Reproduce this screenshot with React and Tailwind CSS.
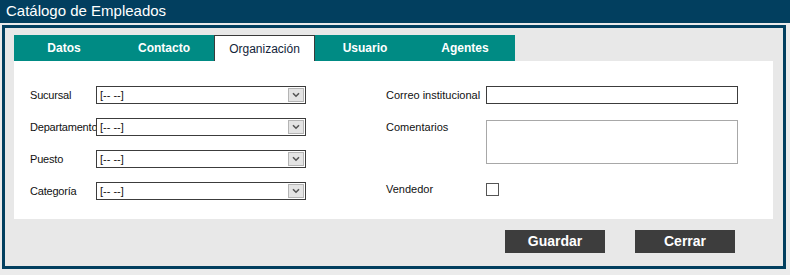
const TABS = ["Datos", "Contacto", "Organización", "Usuario", "Agentes"];
const ACTIVE_TAB = "Organización";

function Tab({ label, active }) {
  if (active) {
    return (
      <div className="flex h-[26px] w-[101px] items-center justify-center border border-b-0 border-[#3a3a3a] bg-white text-[12px] font-medium text-[#13243a]">
        {label}
      </div>
    );
  }
  return (
    <div className="flex h-[26px] w-[100px] items-center justify-center bg-[#008b84] text-[12px] font-bold text-white">
      {label}
    </div>
  );
}

function FakeSelect() {
  return (
    <div className="flex h-[18px] w-[210px] items-center border border-[#3c3c3c] bg-white">
      <span className="flex-1 pl-[3px] text-[11px] leading-none text-[#111]">[-- --]</span>
      <div className="mr-px flex h-[14px] w-[16px] items-center justify-center border border-[#b4b4b4] bg-[#e4e4e4]">
        <svg width="8" height="6" viewBox="0 0 8 6">
          <path d="M1 1.2 L4 4.2 L7 1.2" fill="none" stroke="#555" strokeWidth="1.6" />
        </svg>
      </div>
    </div>
  );
}

function SelectRow({ label }) {
  return (
    <div className="flex h-[18px] items-center">
      <span className="w-[66px] whitespace-nowrap text-[11px] tracking-[-0.2px] text-[#111]">{label}</span>
      <FakeSelect />
    </div>
  );
}

export default function App() {
  return (
    <div
      className="h-[275px] w-[790px] overflow-hidden bg-[#ebebeb]"
      style={{ fontFamily: '"Liberation Sans", Arial, sans-serif' }}
    >
      <header className="flex h-[23px] items-center bg-[#023f5f] pl-[6px] text-[15px] text-white">
        Catálogo de Empleados
      </header>

      <div className="mx-[2px] mt-[2px] h-[244px] w-[784px] border-[3px] border-[#023f5f] bg-[#e8e8e8] px-[9px] pt-[7px]">
        <div className="flex">
          {TABS.map((tab) => (
            <Tab key={tab} label={tab} active={tab === ACTIVE_TAB} />
          ))}
        </div>

        <div className="flex h-[158px] w-[759px] bg-white pl-[16px] pt-[25px]">
          <div className="flex w-[356px] flex-col gap-[14px]">
            <SelectRow label="Sucursal" />
            <SelectRow label="Departamento" />
            <SelectRow label="Puesto" />
            <SelectRow label="Categoría" />
          </div>

          <div className="flex flex-col">
            <div className="flex h-[18px] items-center">
              <span className="w-[100px] text-[11px] text-[#111]">Correo institucional</span>
              <div className="h-[18px] w-[252px] border border-[#3c3c3c] bg-white" />
            </div>
            <div className="mt-[16px] flex">
              <span className="w-[100px] text-[11px] leading-[14px] text-[#111]">Comentarios</span>
              <div className="h-[44px] w-[252px] border border-[#a8a8a8] bg-white" />
            </div>
            <div className="mt-[19px] flex h-[13px] items-center">
              <span className="w-[100px] text-[11px] text-[#111]">Vendedor</span>
              <div className="h-[13px] w-[13px] border border-[#555] bg-white" />
            </div>
          </div>
        </div>

        <div className="mt-[11px] flex justify-end gap-[30px] pr-[39px]">
          <button className="h-[23px] w-[100px] bg-[#3d3d3d] text-[14px] font-bold text-white">
            Guardar
          </button>
          <button className="h-[23px] w-[100px] bg-[#3d3d3d] text-[14px] font-bold text-white">
            Cerrar
          </button>
        </div>
      </div>
    </div>
  );
}
